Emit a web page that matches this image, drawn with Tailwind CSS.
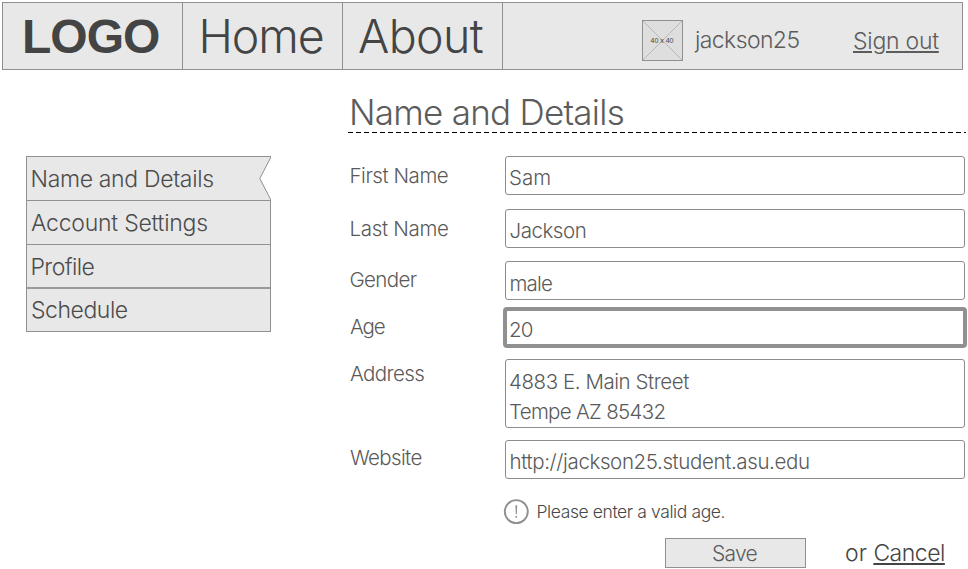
<!DOCTYPE html>
<html lang="en">
<head>
<meta charset="utf-8">
<title>Name and Details</title>
<script src="https://cdn.jsdelivr.net/npm/@tailwindcss/browser@4"></script>
</head>
<body class="w-[968px] h-[569px] overflow-hidden bg-white font-['Inter','Liberation_Sans',sans-serif] font-light text-[#555] whitespace-nowrap">
  <header class="ml-[2px] mt-[2px] w-[961px] h-[68px] flex border border-[#909090] bg-[#e8e8e8] text-[#444]">
    <div class="w-[180px] border-r border-[#909090] pl-[19px] pt-[6px] font-['Liberation_Sans',sans-serif] font-bold text-[48px] leading-[56px] tracking-[-1px]">LOGO</div>
    <nav class="flex text-[46.5px] leading-[56px]">
      <a class="w-[160px] border-r border-[#909090] pl-[15.5px] pt-[5px] tracking-[-1.1px]">Home</a>
      <a class="w-[160px] border-r border-[#909090] pl-[15px] pt-[5px] tracking-[-0.6px]">About</a>
    </nav>
    <div class="ml-[139px] flex text-[23px] leading-[28px] text-[#5c5c5c]">
      <svg class="mt-[17px] w-[41px] h-[41px]" viewBox="0 0 41 41">
        <rect x=".5" y=".5" width="40" height="40" fill="#dedede" stroke="#909090"/>
        <path d="M1 1L40 40M40 1L1 40" stroke="#b8b8b8"/>
        <text x="20" y="23" text-anchor="middle" font-family="Liberation Sans" font-weight="400" font-size="7" fill="#444" textLength="23">40 x 40</text>
      </svg>
      <span class="w-[158px] pl-[12px] pt-[23px] tracking-[-0.6px]">jackson25</span>
      <a class="ml-[12px] pt-[24px] tracking-[-0.25px] underline underline-offset-[2px] decoration-2 [text-decoration-skip-ink:auto]">Sign out</a>
    </div>
  </header>

  <div class="flex">
    <aside class="relative ml-[26px] mt-[86px] w-[245px] h-[176px] border border-[#909090] bg-[#e8e8e8] text-[23px] leading-[28px] text-[#4c4c4c]">
      <div class="h-[44px] border-b border-[#909090] pl-[3.5px] pt-[8px] tracking-[-0.33px]">Name and Details</div>
      <div class="h-[44px] border-b border-[#909090] pl-[4px] pt-[8px] tracking-[-0.25px]">Account Settings</div>
      <div class="h-[44px] border-b-2 border-[#9a9a9a] pl-[3.5px] pt-[8px] tracking-[-0.6px]">Profile</div>
      <div class="pl-[4px] pt-[7px] tracking-[-0.45px]">Schedule</div>
      <svg class="absolute -right-[1px] top-0 w-[12px] h-[43px]" viewBox="0 0 12 43">
        <path d="M12 0V43L.8 21.5Z" fill="#fff"/>
        <path d="M11.7 .5L.8 21.5L11.7 42.5" fill="none" stroke="#909090"/>
      </svg>
    </aside>

    <main class="ml-[77px] flex-1">
      <h1 class="mt-[21px] h-[41px] pl-[1px] text-[35px] leading-[42px] font-light tracking-[-0.75px] text-[#5c5c5c]">Name and Details</h1>
      <svg class="block w-[618px] h-[1px]" viewBox="0 0 618 1"><path d="M0 .5H618" stroke="#000" stroke-dasharray="5 3"/></svg>

      <form class="mt-[23px] text-[20.5px] leading-[29px] text-[#5a5a5a]">
        <div class="flex h-[53px]">
          <label class="w-[157px] pl-[1.5px] pt-[5px] tracking-[-0.45px]">First Name</label>
          <div class="w-[460px] h-[39px] rounded-[3px] border border-[#8c8c8c] pl-[3px] pt-[6px]">Sam</div>
        </div>
        <div class="flex h-[52px]">
          <label class="w-[157px] pl-[1.5px] pt-[5px] tracking-[-0.3px]">Last Name</label>
          <div class="w-[460px] h-[39px] rounded-[3px] border border-[#8c8c8c] pl-[3.5px] pt-[6px] tracking-[-0.45px]">Jackson</div>
        </div>
        <div class="flex h-[46px]">
          <label class="w-[157px] pl-[1.5px] pt-[4px] tracking-[-0.65px]">Gender</label>
          <div class="w-[460px] h-[39px] rounded-[3px] border border-[#8c8c8c] pl-[3.5px] pt-[7px] tracking-[-0.8px]">male</div>
        </div>
        <div class="flex h-[52px]">
          <label class="w-[155px] pl-[2px] pt-[5px] tracking-[-1.1px]">Age</label>
          <div class="w-[464px] h-[41px] rounded-[4px] border-4 border-[#909090] pl-[2px] pt-[4px] tracking-[-0.8px]">20</div>
        </div>
        <div class="flex h-[81px]">
          <label class="w-[157px] pl-[2px] tracking-[-0.6px]">Address</label>
          <div class="w-[460px] h-[69px] rounded-[3px] border border-[#8c8c8c] pl-[3px] pt-[7px] leading-[30px]">
            <div class="tracking-[-0.44px]">4883 E. Main Street</div>
            <div class="tracking-[-0.7px]">Tempe AZ 85432</div>
          </div>
        </div>
        <div class="flex h-[59px]">
          <label class="w-[157px] pl-[2px] pt-[3px] tracking-[-0.65px]">Website</label>
          <div class="w-[460px] h-[39px] rounded-[3px] border border-[#8c8c8c] pl-[3.5px] pt-[6px] tracking-[-0.38px]">http://jackson25.student.asu.edu</div>
        </div>
        <div class="ml-[155px] flex h-[39px]">
          <svg class="w-[26px] h-[26px]" viewBox="0 0 26 26">
            <circle cx="13.3" cy="12.6" r="11.5" fill="none" stroke="#909090" stroke-width="1.9"/>
            <path d="M12.4 6.3H14.2L13.8 15.3H12.8ZM12.5 17H14.1V18.8H12.5Z" fill="#909090"/>
          </svg>
          <span class="pl-[7.5px] text-[17.5px] leading-[26px] text-[#484848] tracking-[-0.4px]">Please enter a valid age.</span>
        </div>
        <div class="ml-[317px] flex">
          <button type="button" class="w-[141px] h-[30px] border border-[#909090] bg-[#e8e8e8] text-[21px] leading-[28px] tracking-[-0.7px] text-[#5c5c5c] pr-[2px] pt-[1px]">Save</button>
          <div class="pl-[39px] pt-[1px] text-[23px] leading-[29px] text-[#444]">or <a class="tracking-[-0.5px] underline underline-offset-[2px] decoration-2">Cancel</a></div>
        </div>
      </form>
    </main>
  </div>
</body>
</html>
